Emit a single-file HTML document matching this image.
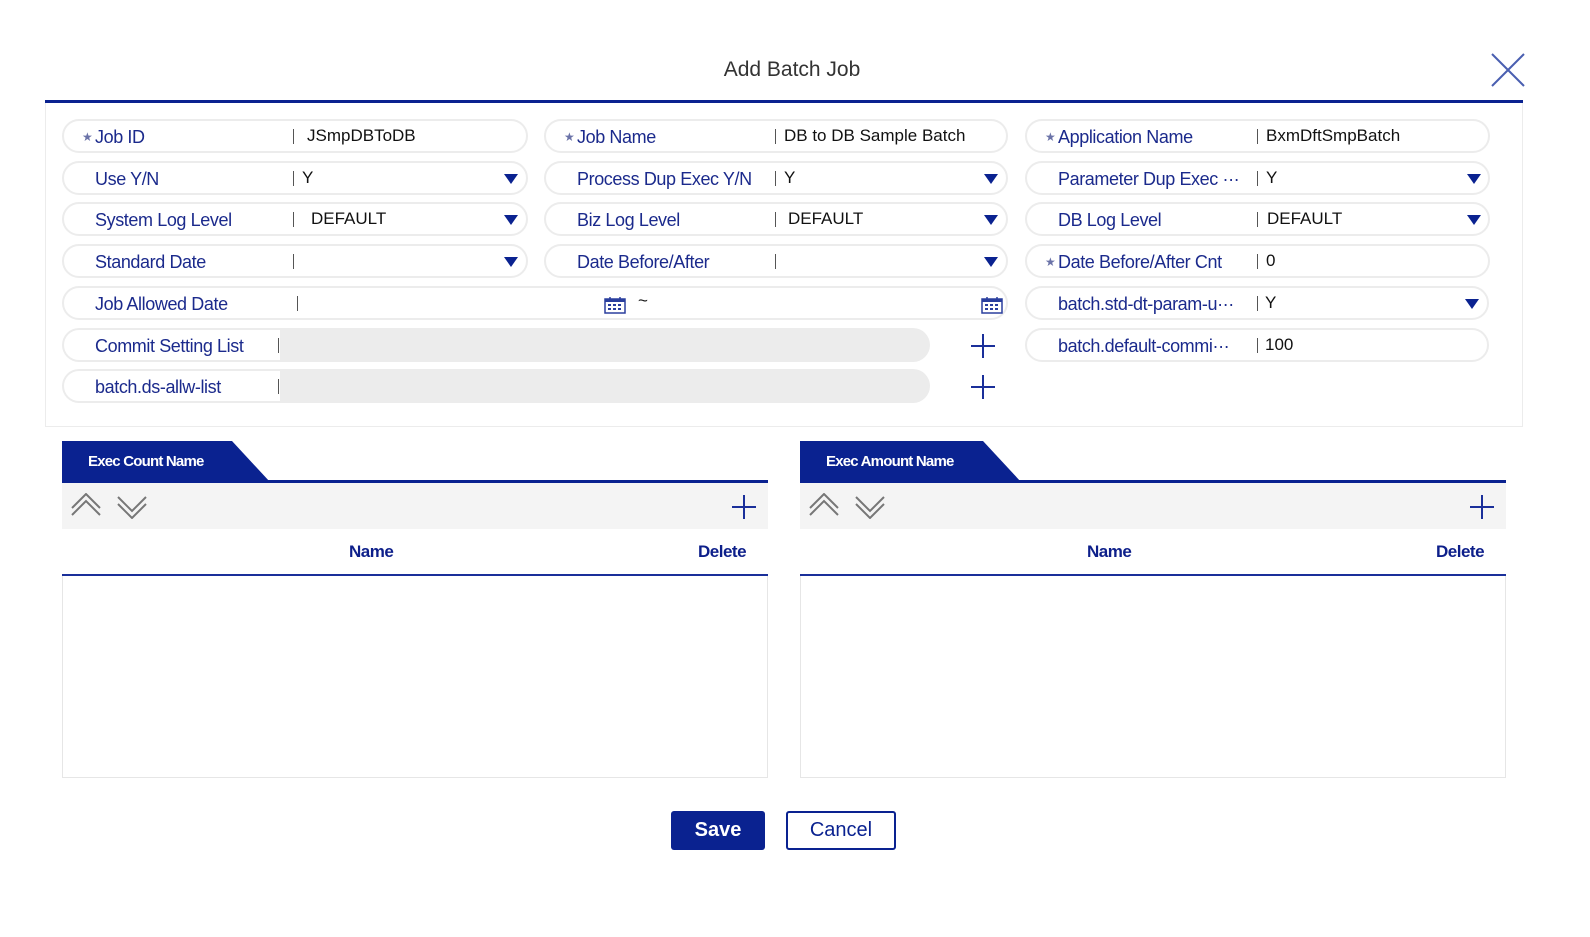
<!DOCTYPE html>
<html><head><meta charset="utf-8">
<style>
*{box-sizing:border-box;margin:0;padding:0}
body{width:1590px;height:937px;background:#fff;position:relative;font-family:"Liberation Sans",sans-serif;overflow:hidden}
.a{position:absolute}
.pill{position:absolute;height:34px;border:2px solid #ececec;border-radius:17px;background:#fff}
.lb{position:absolute;top:6px;font-size:18px;color:#1b2a8c;letter-spacing:-0.4px;white-space:nowrap}
.st{position:absolute;top:9px;font-size:12px;color:#6b73a8}
.sep{position:absolute;top:8px;width:1px;height:15px;background:#555}
.v{position:absolute;top:5px;font-size:17px;color:#111;white-space:nowrap}
.tri{position:absolute;top:11px;width:0;height:0;border-left:7px solid transparent;border-right:7px solid transparent;border-top:10px solid #0a2290}
.gray{position:absolute;top:-2px;height:34px;background:#ececec;border-radius:0 17px 17px 0}
.plus{position:absolute;width:24px;height:24px}
.plus:before{content:"";position:absolute;left:11px;top:0;width:2px;height:24px;background:#1a2f9a}
.plus:after{content:"";position:absolute;top:11px;left:0;height:2px;width:24px;background:#1a2f9a}
.th{position:absolute;font-size:17px;color:#0d1f8a;letter-spacing:-0.5px;font-weight:bold}
</style></head><body>
<div class="a" style="left:0;top:58px;width:1584px;text-align:center;font-size:21px;color:#333">Add Batch Job</div>
<svg class="a" style="left:1490px;top:52px" width="36" height="36"><path d="M2 2L34 34M34 2L2 34" stroke="#4a5fb0" stroke-width="2" fill="none"/></svg>
<div class="a" style="left:45px;top:100px;width:1478px;height:3px;background:#0a2290"></div>
<div class="a" style="left:45px;top:103px;width:1478px;height:324px;border:1px solid #ececec;border-top:none"></div>

<!-- row1 -->
<div class="pill" style="left:62px;top:119px;width:466px"><span class="st" style="left:18px">★</span><span class="lb" style="left:31px">Job ID</span><div class="sep" style="left:229px"></div><span class="v" style="left:243px">JSmpDBToDB</span></div>
<div class="pill" style="left:544px;top:119px;width:464px"><span class="st" style="left:18px">★</span><span class="lb" style="left:31px">Job Name</span><div class="sep" style="left:229px"></div><span class="v" style="left:238px">DB to DB Sample Batch</span></div>
<div class="pill" style="left:1025px;top:119px;width:465px"><span class="st" style="left:18px">★</span><span class="lb" style="left:31px">Application Name</span><div class="sep" style="left:230px"></div><span class="v" style="left:239px">BxmDftSmpBatch</span></div>
<!-- row2 -->
<div class="pill" style="left:62px;top:161px;width:466px"><span class="lb" style="left:31px">Use Y/N</span><div class="sep" style="left:229px"></div><span class="v" style="left:238px">Y</span><div class="tri" style="left:440px"></div></div>
<div class="pill" style="left:544px;top:161px;width:464px"><span class="lb" style="left:31px">Process Dup Exec Y/N</span><div class="sep" style="left:229px"></div><span class="v" style="left:238px">Y</span><div class="tri" style="left:438px"></div></div>
<div class="pill" style="left:1025px;top:161px;width:465px"><span class="lb" style="left:31px">Parameter Dup Exec ···</span><div class="sep" style="left:230px"></div><span class="v" style="left:239px">Y</span><div class="tri" style="left:440px"></div></div>
<!-- row3 -->
<div class="pill" style="left:62px;top:202px;width:466px"><span class="lb" style="left:31px">System Log Level</span><div class="sep" style="left:229px"></div><span class="v" style="left:247px">DEFAULT</span><div class="tri" style="left:440px"></div></div>
<div class="pill" style="left:544px;top:202px;width:464px"><span class="lb" style="left:31px">Biz Log Level</span><div class="sep" style="left:229px"></div><span class="v" style="left:242px">DEFAULT</span><div class="tri" style="left:438px"></div></div>
<div class="pill" style="left:1025px;top:202px;width:465px"><span class="lb" style="left:31px">DB Log Level</span><div class="sep" style="left:230px"></div><span class="v" style="left:240px">DEFAULT</span><div class="tri" style="left:440px"></div></div>
<!-- row4 -->
<div class="pill" style="left:62px;top:244px;width:466px"><span class="lb" style="left:31px">Standard Date</span><div class="sep" style="left:229px"></div><div class="tri" style="left:440px"></div></div>
<div class="pill" style="left:544px;top:244px;width:464px"><span class="lb" style="left:31px">Date Before/After</span><div class="sep" style="left:229px"></div><div class="tri" style="left:438px"></div></div>
<div class="pill" style="left:1025px;top:244px;width:465px"><span class="st" style="left:18px">★</span><span class="lb" style="left:31px">Date Before/After Cnt</span><div class="sep" style="left:230px"></div><span class="v" style="left:239px">0</span></div>
<!-- row5 -->
<div class="pill" style="left:62px;top:286px;width:946px"><span class="lb" style="left:31px">Job Allowed Date</span><div class="sep" style="left:233px"></div>
<svg class="a" style="left:540px;top:8px" width="22" height="18" viewBox="0 0 22 18"><rect x="1" y="3" width="20" height="14" fill="none" stroke="#2a3f9e" stroke-width="1.5"/><rect x="1" y="3" width="20" height="3" fill="#2a3f9e"/><path d="M6 1v4M16 1v4" stroke="#2a3f9e" stroke-width="1.5"/><g fill="#2a3f9e"><rect x="4" y="8" width="3" height="2"/><rect x="9" y="8" width="3" height="2"/><rect x="14" y="8" width="3" height="2"/><rect x="4" y="12" width="3" height="2"/><rect x="9" y="12" width="3" height="2"/><rect x="14" y="12" width="3" height="2"/></g></svg>
<span class="v" style="left:574px;top:3px">~</span>
<svg class="a" style="left:917px;top:8px" width="22" height="18" viewBox="0 0 22 18"><rect x="1" y="3" width="20" height="14" fill="none" stroke="#2a3f9e" stroke-width="1.5"/><rect x="1" y="3" width="20" height="3" fill="#2a3f9e"/><path d="M6 1v4M16 1v4" stroke="#2a3f9e" stroke-width="1.5"/><g fill="#2a3f9e"><rect x="4" y="8" width="3" height="2"/><rect x="9" y="8" width="3" height="2"/><rect x="14" y="8" width="3" height="2"/><rect x="4" y="12" width="3" height="2"/><rect x="9" y="12" width="3" height="2"/><rect x="14" y="12" width="3" height="2"/></g></svg>
</div>
<div class="pill" style="left:1025px;top:286px;width:464px"><span class="lb" style="left:31px">batch.std-dt-param-u···</span><div class="sep" style="left:230px"></div><span class="v" style="left:238px">Y</span><div class="tri" style="left:438px"></div></div>
<!-- row6 -->
<div class="pill" style="left:62px;top:328px;width:866px;border-right:none"><span class="lb" style="left:31px">Commit Setting List</span><div class="sep" style="left:214px"></div><div class="gray" style="left:216px;width:650px"></div></div>
<div class="plus" style="left:971px;top:334px"></div>
<div class="pill" style="left:1025px;top:328px;width:464px"><span class="lb" style="left:31px">batch.default-commi···</span><div class="sep" style="left:230px"></div><span class="v" style="left:238px">100</span></div>
<!-- row7 -->
<div class="pill" style="left:62px;top:369px;width:866px;border-right:none"><span class="lb" style="left:31px">batch.ds-allw-list</span><div class="sep" style="left:214px"></div><div class="gray" style="left:216px;width:650px"></div></div>
<div class="plus" style="left:971px;top:375px"></div>

<!-- grids -->
<div class="a" style="left:62px;top:441px;width:706px;height:337px">
  <svg class="a" style="left:0;top:0" width="210" height="41"><path d="M0 0H170L208 41H0Z" fill="#0a2290"/></svg>
  <div class="a" style="left:26px;top:12px;font-size:15px;color:#fff;letter-spacing:-0.8px;font-weight:bold">Exec Count Name</div>
  <div class="a" style="left:0;top:39px;width:706px;height:3px;background:#0a2290"></div>
  <div class="a" style="left:0;top:42px;width:706px;height:46px;background:#f4f4f4"></div>
  <svg class="a" style="left:8px;top:52px" width="80" height="26"><path d="M2 22L16 8L30 22M2 15L16 1L30 15" stroke="#777" stroke-width="2" fill="none"/><path d="M48 4L62 18L76 4M48 11L62 25L76 11" stroke="#777" stroke-width="2" fill="none"/></svg>
  <div class="plus" style="left:670px;top:54px"></div>
  <div class="th" style="left:287px;top:101px">Name</div>
  <div class="th" style="left:636px;top:101px">Delete</div>
  <div class="a" style="left:0;top:133px;width:706px;height:2px;background:#1a2f9a"></div>
  <div class="a" style="left:0;top:135px;width:706px;height:202px;border:1px solid #e6e6e6;border-top:none"></div>
</div>
<div class="a" style="left:800px;top:441px;width:706px;height:337px">
  <svg class="a" style="left:0;top:0" width="225" height="41"><path d="M0 0H183L221 41H0Z" fill="#0a2290"/></svg>
  <div class="a" style="left:26px;top:12px;font-size:15px;color:#fff;letter-spacing:-0.8px;font-weight:bold">Exec Amount Name</div>
  <div class="a" style="left:0;top:39px;width:706px;height:3px;background:#0a2290"></div>
  <div class="a" style="left:0;top:42px;width:706px;height:46px;background:#f4f4f4"></div>
  <svg class="a" style="left:8px;top:52px" width="80" height="26"><path d="M2 22L16 8L30 22M2 15L16 1L30 15" stroke="#777" stroke-width="2" fill="none"/><path d="M48 4L62 18L76 4M48 11L62 25L76 11" stroke="#777" stroke-width="2" fill="none"/></svg>
  <div class="plus" style="left:670px;top:54px"></div>
  <div class="th" style="left:287px;top:101px">Name</div>
  <div class="th" style="left:636px;top:101px">Delete</div>
  <div class="a" style="left:0;top:133px;width:706px;height:2px;background:#1a2f9a"></div>
  <div class="a" style="left:0;top:135px;width:706px;height:202px;border:1px solid #e6e6e6;border-top:none"></div>
</div>

<!-- buttons -->
<div class="a" style="left:671px;top:811px;width:94px;height:39px;background:#0a2290;border-radius:3px;color:#fff;font-size:20px;text-align:center;line-height:39px;font-weight:bold">Save</div>
<div class="a" style="left:786px;top:811px;width:110px;height:39px;border:2px solid #0a2290;border-radius:3px;color:#0a2290;font-size:20px;text-align:center;line-height:35px">Cancel</div>
</body></html>
